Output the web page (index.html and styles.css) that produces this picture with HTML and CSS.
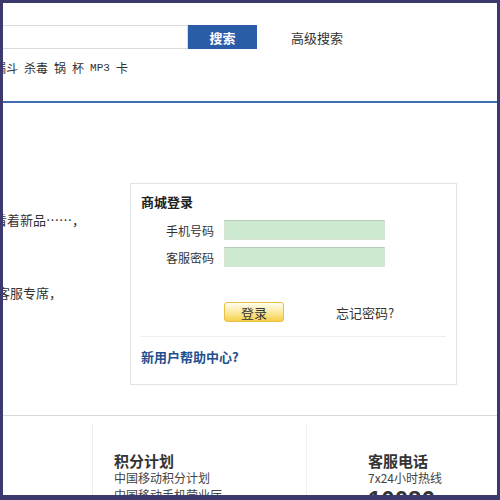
FILE: index.html
```html
<!DOCTYPE html>
<html>
<head>
    <title>商城登录</title>
    <link rel="stylesheet" href="styles.css">
</head>
<body>
    <div class="shot">
        <div class="header">
            <div class="search-row">
                <input class="search-input" type="text">
                <button type="button" class="search-btn">搜索</button>
                <span class="adv-link">高级搜索</span>
            </div>
            <div class="hot-words">
                <span>漏斗</span>
                <span>杀毒</span>
                <span>锅</span>
                <span>杯</span>
                <span class="mono">MP3</span>
                <span>卡</span>
            </div>
        </div>

        <div class="main">
            <div class="intro">
                <p class="intro-line first">随时看着新品……，</p>
                <p class="intro-line second">专属客服专席，</p>
            </div>

            <div class="login-box">
                <h2>商城登录</h2>
                <div class="form-row">
                    <label>手机号码</label>
                    <input type="text" class="field">
                </div>
                <div class="form-row second-row">
                    <label>客服密码</label>
                    <input type="password" class="field">
                </div>
                <div class="action-row">
                    <button type="button" class="login-btn">登录</button>
                    <span class="forgot">忘记密码?</span>
                </div>
                <div class="help">新用户帮助中心?</div>
            </div>
        </div>

        <div class="footer">
            <div class="col col-empty"></div>
            <div class="col col-points">
                <h3>积分计划</h3>
                <p>中国移动积分计划</p>
                <p>中国移动手机营业厅</p>
            </div>
            <div class="col col-phone">
                <h3>客服电话</h3>
                <p class="small">7x24小时热线</p>
                <p class="big">10086</p>
            </div>
        </div>
    </div>
</body>
</html>
```

FILE: styles.css
```css
html, body {
    margin: 0;
    padding: 0;
}

body {
    font-family: "Noto Sans CJK SC", "DejaVu Sans", sans-serif;
    color: #333;
}

.shot {
    width: 500px;
    height: 500px;
    box-sizing: border-box;
    border: 3px solid #3b396e;
    border-bottom-width: 5px;
    background: #fff;
    overflow: hidden;
}

/* header */
.header {
    border-bottom: 2px solid #3f6db0;
    padding-bottom: 26px;
}

.search-row {
    display: flex;
    align-items: center;
    margin-top: 22px;
}

.search-input {
    width: 185px;
    height: 24px;
    box-sizing: border-box;
    border: 1px solid #dadada;
    border-left: none;
    margin: 0;
    padding: 0;
}

.search-btn {
    width: 69px;
    height: 24px;
    margin: 0;
    border: none;
    background-color: #2a5ca8;
    color: #fff;
    font-family: inherit;
    font-size: 13px;
    font-weight: bold;
}

.adv-link {
    margin-left: 34px;
    font-size: 13px;
    color: #333;
}

.hot-words {
    display: flex;
    gap: 6px;
    margin-top: 12px;
    margin-left: -9px;
    font-size: 12px;
    line-height: 14px;
    color: #333;
}

.hot-words .mono {
    font-family: "Liberation Mono", monospace;
    font-size: 11px;
}

/* main */
.main {
    display: flex;
    align-items: flex-start;
    padding-top: 80px;
}

.intro {
    width: 127px;
    flex-shrink: 0;
    overflow: hidden;
}

.intro-line {
    margin: 0;
    font-size: 13px;
    line-height: 18px;
    white-space: nowrap;
}

.intro-line.first {
    margin-top: 28px;
    margin-left: -35px;
}

.intro-line.second {
    margin-top: 55px;
    margin-left: -32px;
}

.login-box {
    width: 327px;
    height: 202px;
    box-sizing: border-box;
    border: 1px solid #e3e3e3;
    padding: 10px 10px 0 10px;
}

.login-box h2 {
    margin: 0;
    font-size: 13px;
    line-height: 16px;
    font-weight: bold;
    color: #222;
}

.form-row {
    display: flex;
    align-items: center;
    margin-top: 10px;
}

.form-row.second-row {
    margin-top: 7px;
}

.form-row label {
    width: 73px;
    text-align: right;
    margin-right: 10px;
    font-size: 12px;
    color: #333;
}

.field {
    width: 161px;
    height: 20px;
    box-sizing: border-box;
    margin: 0;
    padding: 0;
    border: 1px solid #d6e4d6;
    border-top-color: #b9c9b9;
    background-color: #cde9cf;
}

.action-row {
    display: flex;
    align-items: center;
    margin-top: 35px;
    padding-left: 83px;
    padding-bottom: 14px;
    border-bottom: 1px solid #eeeeee;
}

.login-btn {
    width: 60px;
    height: 20px;
    margin: 0;
    padding: 0;
    border: 1px solid #e8bf45;
    border-radius: 3px;
    background: linear-gradient(#fffdf0, #fbe68f 60%, #f4cf4a);
    font-family: inherit;
    font-size: 13px;
    color: #333;
}

.forgot {
    margin-left: 52px;
    font-size: 13px;
    color: #333;
}

.help {
    margin-top: 12px;
    font-size: 13px;
    line-height: 16px;
    font-weight: bold;
    color: #1f4f8e;
}

/* footer */
.footer {
    display: flex;
    margin-top: 30px;
    border-top: 1px solid #d9d9d9;
    padding-top: 8px;
}

.col {
    height: 80px;
}

.col-empty {
    width: 89px;
}

.col-points {
    width: 192px;
    border-left: 1px solid #efefef;
    padding: 28px 0 0 21px;
}

.col-phone {
    flex: 1;
    border-left: 1px solid #efefef;
    padding: 28px 0 0 61px;
}

.col h3 {
    margin: 0;
    font-size: 15px;
    line-height: 17px;
    font-weight: bold;
    color: #333;
}

.col p {
    margin: 0;
    font-size: 12px;
    line-height: 17px;
    color: #444;
}

.col p.small {
    font-size: 12px;
    line-height: 17px;
}

.col p.big {
    font-family: "Liberation Sans", Arial, sans-serif;
    font-size: 24px;
    line-height: 28px;
    font-weight: bold;
    color: #333;
}
```
